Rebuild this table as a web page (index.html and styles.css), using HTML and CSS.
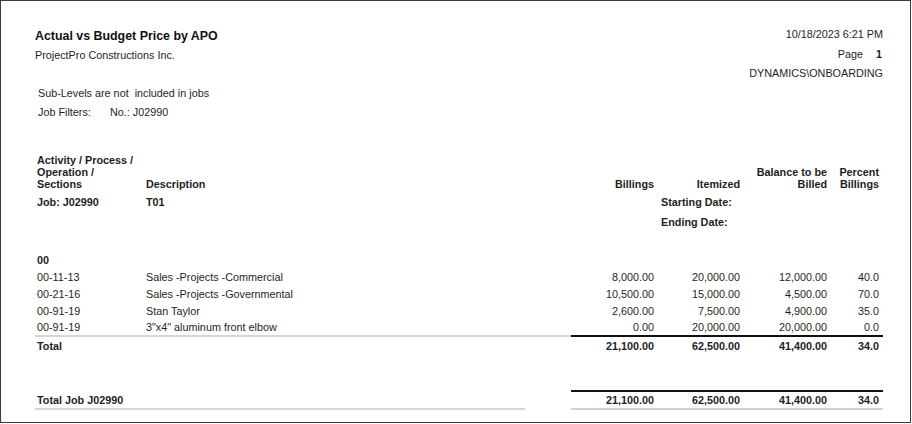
FILE: index.html
```html
<!DOCTYPE html>
<html>
<head>
<meta charset="utf-8">
<link rel="stylesheet" href="styles.css">
</head>
<body>
<div class="page">
  <div class="head">
    <div class="head-left">
      <div class="title">Actual vs Budget Price by APO</div>
      <div class="company">ProjectPro Constructions Inc.</div>
    </div>
    <div class="head-right">
      <div>10/18/2023 6:21 PM</div>
      <div>Page<span class="pg">1</span></div>
      <div>DYNAMICS\ONBOARDING</div>
    </div>
  </div>
  <div class="filters">
    <div>Sub-Levels are not&nbsp; included in jobs</div>
    <div class="jf"><span class="jf-label">Job Filters:</span><span>No.: J02990</span></div>
  </div>

  <div class="row hdr">
    <div class="c">Activity / Process /<br>Operation /<br>Sections</div>
    <div class="c">Description</div>
    <div class="c n">Billings</div>
    <div class="c n">Itemized</div>
    <div class="c n">Balance to be<br>Billed</div>
    <div class="c n">Percent<br>Billings</div>
  </div>

  <div class="row job">
    <div class="c">Job: J02990</div>
    <div class="c">T01</div>
    <div class="c"></div>
    <div class="c date">Starting Date:</div>
  </div>
  <div class="row job2">
    <div class="c"></div>
    <div class="c"></div>
    <div class="c"></div>
    <div class="c date">Ending Date:</div>
  </div>

  <div class="row grp">
    <div class="c">00</div>
  </div>

  <div class="row data">
    <div class="c">00-11-13</div>
    <div class="c">Sales -Projects -Commercial</div>
    <div class="c n">8,000.00</div>
    <div class="c n">20,000.00</div>
    <div class="c n">12,000.00</div>
    <div class="c n">40.0</div>
  </div>
  <div class="row data">
    <div class="c">00-21-16</div>
    <div class="c">Sales -Projects -Governmental</div>
    <div class="c n">10,500.00</div>
    <div class="c n">15,000.00</div>
    <div class="c n">4,500.00</div>
    <div class="c n">70.0</div>
  </div>
  <div class="row data">
    <div class="c">00-91-19</div>
    <div class="c">Stan Taylor</div>
    <div class="c n">2,600.00</div>
    <div class="c n">7,500.00</div>
    <div class="c n">4,900.00</div>
    <div class="c n">35.0</div>
  </div>
  <div class="row data last">
    <div class="c gl">00-91-19</div>
    <div class="c gl">3"x4" aluminum front elbow</div>
    <div class="c n bl">0.00</div>
    <div class="c n bl">20,000.00</div>
    <div class="c n bl">20,000.00</div>
    <div class="c n bl">0.0</div>
  </div>
  <div class="row total">
    <div class="c">Total</div>
    <div class="c"></div>
    <div class="c n">21,100.00</div>
    <div class="c n">62,500.00</div>
    <div class="c n">41,400.00</div>
    <div class="c n">34.0</div>
  </div>

  <div class="row tjob">
    <div class="c tj-label">Total Job J02990</div>
    <div class="c n tj">21,100.00</div>
    <div class="c n tj">62,500.00</div>
    <div class="c n tj">41,400.00</div>
    <div class="c n tj">34.0</div>
  </div>
</div>
</body>
</html>
```

FILE: styles.css
```css
html, body {
  margin: 0;
  padding: 0;
  background: #ffffff;
}

body {
  font-family: "Liberation Sans", Arial, sans-serif;
  font-size: 10.8px;
  color: #1e1e1e;
}

.page {
  box-sizing: border-box;
  width: 911px;
  height: 423px;
  border: 1px solid #3c3c3c;
  padding: 24px 27px 0 34px;
}

.head {
  display: flex;
  justify-content: space-between;
  height: 58.5px;
}

.title {
  margin-top: 4px;
  font-size: 12.4px;
  font-weight: bold;
  line-height: 14px;
  color: #111;
}

.company {
  margin-top: 5px;
  line-height: 14px;
}

.head-right {
  text-align: right;
  line-height: 19.5px;
}

.pg {
  display: inline-block;
  margin-left: 13px;
  padding-right: 1px;
  font-weight: bold;
}

.filters {
  padding-left: 3px;
  line-height: 19px;
}

.jf {
  display: flex;
}

.jf-label {
  width: 72px;
}

.row {
  display: grid;
  grid-template-columns: 109px 427px 87px 86px 87px 52px;
}

.c {
  padding-left: 2px;
  white-space: nowrap;
}

.n {
  padding-left: 0;
  padding-right: 4px;
  text-align: right;
}

.hdr {
  margin-top: 32px;
  align-items: end;
  font-weight: bold;
  line-height: 12px;
}

.job {
  margin-top: 4px;
  font-weight: bold;
  line-height: 16px;
}

.job2 {
  margin-top: 4px;
  font-weight: bold;
  line-height: 16px;
}

.date {
  grid-column: 4 / 7;
  padding-left: 3px;
}

.grp {
  margin-top: 22.5px;
  font-weight: bold;
  line-height: 17px;
}

.data {
  line-height: 17px;
}

.data.last {
  line-height: 15px;
}

.gl {
  border-bottom: 2px solid #d6d6d6;
}

.bl {
  border-bottom: 2px solid #111;
}

.total {
  font-weight: bold;
  line-height: 18px;
}

.tjob {
  margin-top: 35px;
  font-weight: bold;
  line-height: 16px;
}

.tj-label {
  grid-column: 1 / 3;
  background: linear-gradient(#d6d6d6, #d6d6d6) no-repeat left bottom / 490px 2px;
  padding-top: 2px;
  padding-bottom: 2px;
}

.tj {
  border-top: 2px solid #111;
  border-bottom: 2px solid #d0d0d0;
}
```
